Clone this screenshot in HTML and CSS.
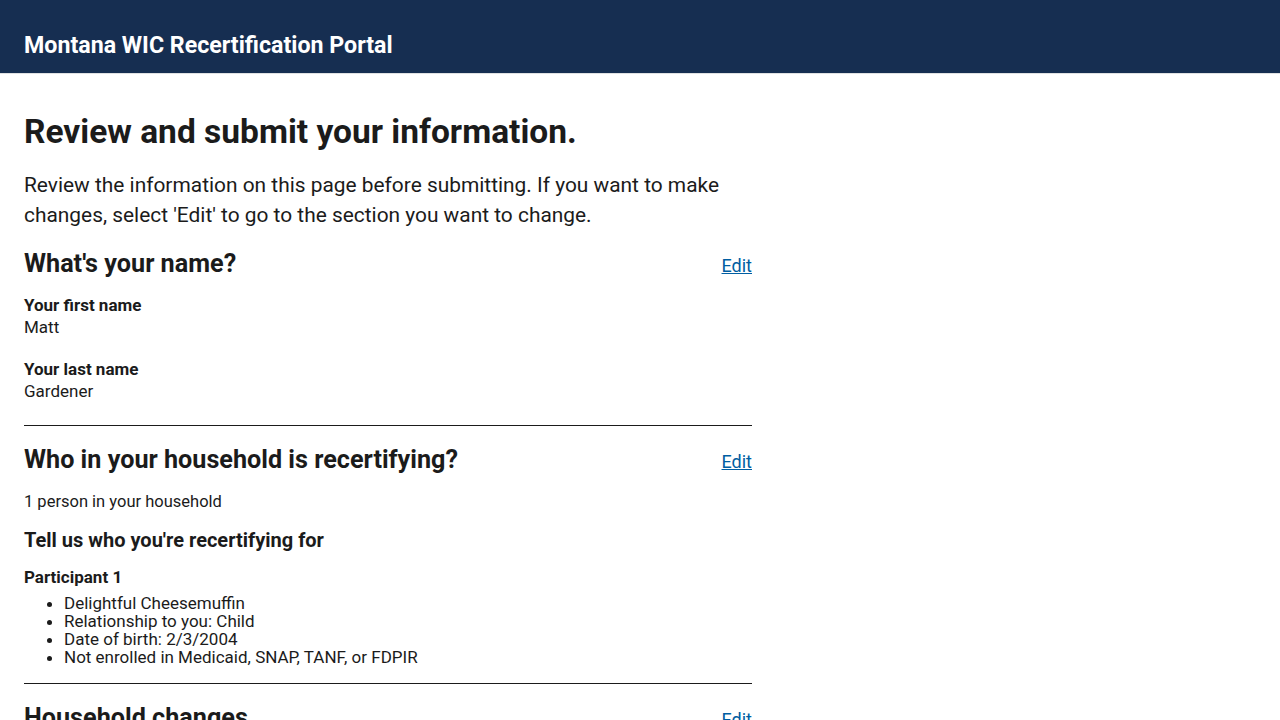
FILE: index.html
```html
<!DOCTYPE html>
<html lang="en">
<head>
<meta charset="utf-8">
<title>Montana WIC Recertification Portal</title>
<link rel="stylesheet" href="styles.css">
</head>
<body>
<header class="site-header">
  <div class="site-title">Montana WIC Recertification Portal</div>
</header>
<main class="main">
  <h1 class="page-title">Review and submit your information.</h1>
  <p class="lead">Review the information on this page before submitting. If you want to make changes, select 'Edit' to go to the section you want to change.</p>

  <section class="review-section name-section">
    <div class="section-head">
      <h2 class="section-title">What's your name?</h2>
      <a class="edit-link" href="#">Edit</a>
    </div>
    <dl class="field">
      <dt class="field-label">Your first name</dt>
      <dd class="field-value">Matt</dd>
    </dl>
    <dl class="field">
      <dt class="field-label">Your last name</dt>
      <dd class="field-value">Gardener</dd>
    </dl>
  </section>

  <section class="review-section">
    <div class="section-head">
      <h2 class="section-title">Who in your household is recertifying?</h2>
      <a class="edit-link" href="#">Edit</a>
    </div>
    <p class="text">1 person in your household</p>
    <h3 class="sub-title">Tell us who you're recertifying for</h3>
    <div class="participant-label">Participant 1</div>
    <ul class="participant-list">
      <li>Delightful Cheesemuffin</li>
      <li>Relationship to you: Child</li>
      <li>Date of birth: 2/3/2004</li>
      <li>Not enrolled in Medicaid, SNAP, TANF, or FDPIR</li>
    </ul>
  </section>

  <section class="review-section">
    <div class="section-head">
      <h2 class="section-title">Household changes</h2>
      <a class="edit-link" href="#">Edit</a>
    </div>
  </section>
</main>
</body>
</html>
```
FILE: styles.css
```css
* { box-sizing: border-box; }
html, body { margin: 0; padding: 0; }
body {
  font-family: Roboto, "Liberation Sans", sans-serif;
  color: #1b1b1b;
  background: #fff;
}
.site-header {
  background: #162e51;
  height: 74px;
  padding: 0 24px;
  display: flex;
  align-items: flex-end;
  border-bottom: 1px solid #dfe1e2;
}
.site-title {
  color: #fff;
  font-weight: 700;
  font-size: 23.2px;
  line-height: 1;
  padding-bottom: 16px;
}
.main {
  width: 776px;
  padding: 24px 24px 0;
}
.page-title {
  font-size: 33.5px;
  line-height: 40px;
  font-weight: 700;
  margin: 14px 0 0;
}
.lead {
  font-size: 20.9px;
  line-height: 30px;
  margin: 18px 0 0;
}
.review-section {
  border-bottom: 1px solid #1b1b1b;
  padding-bottom: 16px;
  margin-top: 18px;
}
.review-section + .review-section { margin-top: 18px; }
.section-head {
  display: flex;
  justify-content: space-between;
  align-items: flex-start;
}
.section-title {
  font-size: 25.2px;
  line-height: 30px;
  font-weight: 700;
  margin: 0;
  padding-top: 1px;
}
.edit-link {
  color: #005ea2;
  font-size: 18px;
  line-height: 21px;
  text-decoration: underline;
  margin-top: 7px;
}
.field { margin: 15px 0 0; }
.field + .field { margin-top: 20px; }
.name-section .field:last-of-type { margin-bottom: 7px; }
.field-label {
  font-weight: 700;
  font-size: 17px;
  line-height: 22px;
}
.field-value {
  margin: 0;
  font-size: 17px;
  line-height: 22px;
}
.text {
  font-size: 16.5px;
  line-height: 22px;
  margin: 16px 0 0;
}
.sub-title {
  font-size: 20px;
  line-height: 24px;
  font-weight: 700;
  margin: 15px 0 0;
}
.participant-label {
  font-weight: 700;
  font-size: 17px;
  line-height: 22px;
  margin-top: 14px;
}
.participant-list {
  margin: 6px 0 1px;
  padding-left: 40px;
  font-size: 17px;
  line-height: 18px;
}
```
